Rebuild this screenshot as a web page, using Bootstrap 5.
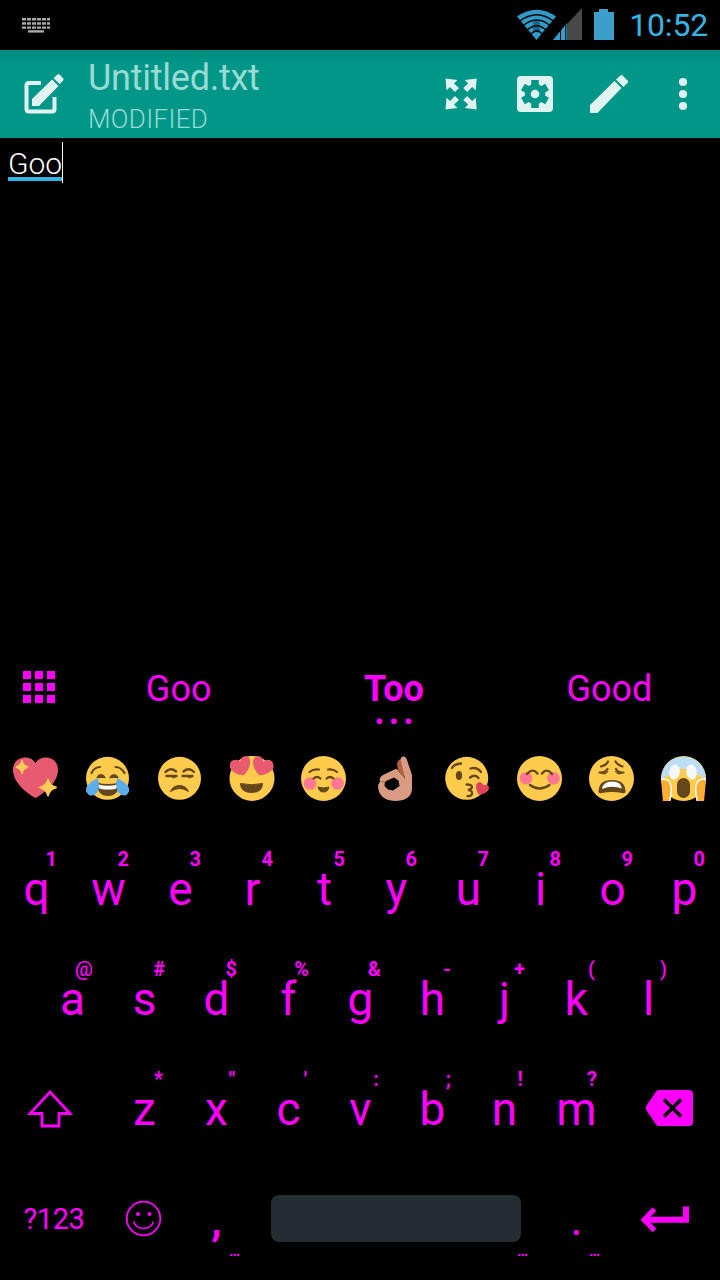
<!DOCTYPE html>
<html lang="en">
<head>
<meta charset="utf-8">
<meta name="viewport" content="width=device-width, initial-scale=1">
<title>Untitled.txt</title>
<link href="https://cdn.jsdelivr.net/npm/bootstrap@5.3.0/dist/css/bootstrap.min.css" rel="stylesheet">
<style>
  body { width: 720px; height: 1280px; overflow: hidden; background: #000; font-family: Roboto, "Noto Sans", sans-serif; color: #f0f; }
  svg { display: block; flex: none; }
  .statusbar { height: 50px; padding: 0 12px 0 22px; }
  .clock { font-size: 32px; line-height: 50px; color: #33b5e5; margin-left: 14px; letter-spacing: -.2px; }
  .appbar { height: 88px; background: linear-gradient(#008d7f, #009688 16px); }
  .doc-title { font-size: 36px; line-height: 40px; color: #9adad3; letter-spacing: -.25px; }
  .doc-state { font-size: 26px; line-height: 30px; color: #9adad3; font-weight: 300; letter-spacing: .35px; padding-top: 6px; }
  .editor { height: 512px; padding: 4px 8px; }
  .typed { font-size: 30px; font-weight: 300; line-height: 44px; height: 41px; color: #fff; border-right: 1px solid #fff; }
  .typed::after { content: ""; position: absolute; left: 0; right: 0; bottom: 2px; height: 4px; background: #33b5e5; }
  .suggestions { height: 92px; padding-right: 3px; font-size: 36px; line-height: 79px; }
  .grid-key { width: 71px; padding: 21px 0 0 23px; }
  .more { left: 0; right: -4px; top: 57px; font-size: 36px; line-height: 10px; letter-spacing: 4px; }
  .emoji-row { height: 92px; padding-top: 13px; }
  .keyrow { height: 110px; }
  .keyrow.short-row { padding: 0 36px; }
  .keyrow.last-row { height: 116px; }
  .key { width: 72px; font-size: 46px; line-height: 111px; padding-left: 1px; }
  .key.wide { width: 108px; padding-left: 0; }
  .key.comma { font-weight: 700; font-size: 42px; line-height: 114px; }
  .hint { right: 15px; top: 15px; font-size: 20px; line-height: 20px; font-weight: 700; }
  .hint.sym { font-weight: 500; }
  .hint.thin { right: 17px; }
  .dots { right: 12px; top: 77px; font-size: 15px; line-height: 20px; font-weight: 700; }
  .key.mode { font-size: 29px; line-height: 111px; letter-spacing: -.4px; }
  .space { width: 250px; height: 47px; background: #232d32; border-radius: 8px; margin: 31px 19px 0; }
</style>
</head>
<body>
<header>
  <div class="statusbar d-flex align-items-center">
    <svg class="me-auto" width="29" height="18" viewBox="0 0 29 18" stroke="#aaa" stroke-width="2.4"><path d="M0 3.300h28M0 7.500h28M0 11.600h28" stroke-dasharray="4 1"/><path d="M6 15.400h16"/></svg>
    <svg width="98" height="34" viewBox="0 0 98 34">
      <path d="M0 8.500Q20-5 39 8.500L19.500 32z" fill="#2f9bc8"/>
      <circle cx="19.500" cy="15" r="3.500" fill="#17698a"/><circle cx="19.500" cy="21" r="3.500" fill="#17698a"/>
      <g fill="none" stroke="#000" stroke-width="1.300"><path d="M2 13.500Q20 0 37 13.500M5.500 18Q20 6 33.500 18M9.500 22.500Q20 13 29.500 22.500M13 27Q20 19 26 27"/></g>
      <path d="M65 0V32H50V16z" fill="#484848"/><path d="M50 15V32H36z" fill="#33a0cc"/><path d="M43.500 18v14M48.800 14v18" stroke="#000" stroke-width="1"/>
      <path d="M77 4h5V1h9v3h6v28H77z" fill="#3b9fc9"/>
    </svg>
    <span class="clock">10:52</span>
  </div>
  <nav class="appbar d-flex">
    <svg width="88" height="88" viewBox="0 0 88 88" fill="#e0f3f1">
      <path d="M41 33H29q-2.500 0-2.500 2.500V59q0 2.500 2.500 2.500h23q2.500 0 2.500-2.500V47" fill="none" stroke="#e0f3f1" stroke-width="4"/>
      <path d="M32 49L52 29.500L58.500 36L39 56H32z"/><path d="M53.500 28.300L57.500 24.500q1-.8 2 0L63.200 28.300q.8 1 0 2L59.800 34z"/>
    </svg>
    <div class="flex-grow-1 pt-2">
      <div class="doc-title">Untitled.txt</div>
      <div class="doc-state">MODIFIED</div>
    </div>
    <svg width="296" height="88" viewBox="424 50 296 88" fill="#e0f3f1">
      <g id="arrows"><path id="arw" d="M445.500 78.500l12 1.500-3.500 3.500 5 4.500-4 4-5-5-3.500 3.500z"/>
      <use href="#arw" transform="matrix(-1 0 0 1 922.200 0)"/></g>
      <use href="#arrows" transform="matrix(1 0 0 -1 0 188)"/>
      <rect x="517" y="76" width="36" height="36" rx="4"/>
      <g stroke="#009688" stroke-width="7.500"><path d="M535 80v28M522.900 87l24.200 14M522.900 101l24.200-14"/></g>
      <circle cx="535" cy="94" r="10.300" fill="#009688"/>
      <circle cx="535" cy="94" r="4.300"/>
      <path d="M590 105L614.500 81L621.500 88L597.500 113H590z"/><path d="M616 79.500L620.500 75.500q1-.8 2 0L627.800 80.800q.8 1 0 2L623.500 87z"/>
      <circle cx="683" cy="82" r="4.100"/><circle cx="683" cy="94" r="4.100"/><circle cx="683" cy="106" r="4.100"/>
    </svg>
  </nav>
</header>

<main class="editor d-flex align-items-start"><div class="typed position-relative">Goo</div></main>

<section>
  <div class="suggestions d-flex text-center">
    <div class="grid-key"><svg width="32" height="32" viewBox="0 0 32 32"><path d="M0 4h32M0 16h32M0 28h32" stroke="#f0f" stroke-width="8" stroke-dasharray="8 4"/></svg></div>
    <div class="flex-fill w-25">Goo</div>
    <div class="flex-fill w-25 position-relative"><b>Too</b><b class="more position-absolute">...</b></div>
    <div class="flex-fill w-25">Good</div>
  </div>

  <div class="emoji-row d-flex">
    <svg width="72" height="48" viewBox="0 0 72 48">
      <path d="M35.500 43C28 39 13 28 13 15C13 1 30-1 35.500 8C41-1 58 1 58 15C58 28 43 39 35.500 43z" fill="#e75a70"/>
      <path d="M22 6q1 5 5.500 6-4.500 1-5.500 6-1-5-5.500-6 4.500-1 5.500-6zM48 24.500q1.500 6.500 8 8-6.500 1.500-8 8-1.500-6.500-8-8 6.500-1.500 8-8z" fill="#fdcb58" stroke="#fdcb58" stroke-width="1.800" stroke-linejoin="round"/>
    </svg>
    <svg width="72" height="48" viewBox="0 0 72 48">
      <circle cx="35.500" cy="23.300" r="21.500" fill="#ffcb4c"/>
      <path d="M19.500 18Q22.500 12 28 12M43.500 12Q49 12 52.500 18" fill="none" stroke="#65471b" stroke-width="2.200" stroke-linecap="round"/>
      <path d="M25 23q4-6 8 0M38 23q4-6 8 0" fill="#65471b" stroke="#65471b" stroke-width="2"/>
      <path d="M25 27.500q10.500 3 22 0Q47 41 36 41T25 27.500z" fill="#65471b"/><path d="M26 29.500q10 2.500 20 0-1 4-3 4.500-7 1-14 0-3-.5-3-4.500z" fill="#fff"/>
      <path d="M26 23Q28 31 25.500 37Q22 42 17 40Q12 36 15 31Q18 27 26 23zM45 23Q43 31 46 37Q50 42 54.500 40Q59 36 56 31Q53 27 45 23z" fill="#5dadec"/>
    </svg>
    <svg width="72" height="48" viewBox="0 0 72 48">
      <circle cx="35.500" cy="23.300" r="21.500" fill="#ffcb4c"/>
      <g fill="none" stroke="#65471b" stroke-width="2.400" stroke-linecap="round"><path d="M21.500 17Q27 12 32 16.500M39.500 16.500Q45 12 50 17"/><path d="M22.500 21h10M38.500 21h10"/></g>
      <path d="M28 21h4.500q-2 3.500-4.500 1.500zM44 21h4.500q-2 3.500-4.500 1.500z" fill="#65471b"/>
      <path d="M26.500 36.500Q29 30.500 35.500 30.500T44.500 36.500Q40 33.500 35.500 33.500T26.500 36.500z" fill="#65471b" stroke="#65471b"/>
    </svg>
    <svg width="72" height="48" viewBox="0 0 72 48">
      <path d="M29 2q7-2 14 0a22.500 22.500 0 1 1-14 0z" fill="#ffcb4c"/>
      <path d="M24.500 28.500q11 2.500 22 0 0 9-11 9T24.500 28.500z" fill="#65471b" stroke="#65471b" stroke-linejoin="round"/>
      <g fill="#e75a70"><path d="M27.500 20.500Q17 19 14 13Q13 6 18 5Q22.500 4 24 7Q25 1 30 1Q35 2 34 9Q33 15 27.500 20.500z"/><path d="M43.500 20.500Q54 19 57.500 13Q58 6 53.500 5Q49 4 47.500 7Q46.500 1 42 1Q36.500 2 37 9Q38 15 43.500 20.500z"/></g>
    </svg>
    <svg width="72" height="48" viewBox="0 0 72 48">
      <circle cx="35.500" cy="23.500" r="22.500" fill="#ffcb4c"/>
      <g fill="#ff7892"><circle cx="22" cy="28.500" r="6.300"/><circle cx="49.500" cy="28.500" r="6.300"/></g>
      <g fill="none" stroke="#65471b" stroke-width="2.200" stroke-linecap="round"><path d="M21.500 17Q25.500 13.500 31 14.500M40 14.500Q45 13.500 49 17"/><path d="M25.500 23.500Q29 20.500 32.500 23.500M38.500 23.500Q42 20.500 45.500 23.500"/></g>
      <path d="M30 32q5.500 2 11 0-1 5-5.500 5t-5.500-5z" fill="#65471b" stroke="#65471b" stroke-linejoin="round"/>
    </svg>
    <svg width="72" height="48" viewBox="0 0 72 48">
      <path d="M37 9Q38 4 42 4L45 26L38 15z" fill="#b55e45"/>
      <path fill-rule="evenodd" d="M41 6Q40 2 43 1.500Q46 1 47 5L52 20V35Q50 46 35 46Q18 45 18 30L20 27Q19 22 23 20L35.500 14Q38 14 39 17L45 24zM25 26.500L24.500 31L28 34.500L33 35.500L39.500 31L38.500 25.500L34 22.500z" fill="#d99b82"/>
      <path d="M21 26.500l4 .5 2-1.500" fill="none" stroke="#b55e45" stroke-width="1"/>
    </svg>
    <svg width="72" height="48" viewBox="0 0 72 48">
      <circle cx="34.700" cy="23.300" r="21.500" fill="#ffcb4c"/>
      <ellipse cx="27" cy="20.500" rx="3.100" ry="4.500" fill="#65471b"/>
      <g fill="none" stroke="#65471b" stroke-width="2.300" stroke-linecap="round"><path d="M20 13Q22 9 29 8.500M38.500 13.500Q45 11.500 49 17M38 22.500Q43 18.500 46.500 23M34.500 29.500Q40 29.500 40 32Q39.500 34.500 36 35Q41 35.500 40 39Q39 41.500 35.500 41"/></g>
      <path d="M38 23q5-6 9 0-5-2-9 0z" fill="#65471b"/>
      <path d="M47 40Q43 34 44.500 29Q48 24.500 51.500 30Q57 28.500 57 34Q55 38.500 47 40z" fill="#e0455a"/>
    </svg>
    <svg width="72" height="48" viewBox="0 0 72 48">
      <circle cx="35.500" cy="23.500" r="22.500" fill="#ffcb4c"/>
      <g fill="#ff7892"><circle cx="22" cy="23.300" r="6.300"/><circle cx="49.500" cy="23.300" r="6.300"/></g>
      <path d="M23 19Q28.500 12.500 33.500 18.500M38 18.500Q43 12.500 48 19M26 30Q35.500 37 45.500 30" fill="none" stroke="#65471b" stroke-width="2.400" stroke-linecap="round"/>
    </svg>
    <svg width="72" height="48" viewBox="0 0 72 48">
      <circle cx="35.500" cy="23.500" r="22.500" fill="#ffcb4c"/>
      <g fill="none" stroke="#65471b" stroke-width="2.200" stroke-linecap="round"><path d="M25 11.500Q30 10.500 32 6.500M39.500 6.500Q42 10.500 46.500 11.500M23.500 17.500Q29 18 31.500 14M40 14Q42 18 47.500 17.500"/></g>
      <path d="M25 18q4 1 7-2-2 5-7 2zM39 16q3 3 7 2-4 3-7-2z" fill="#65471b" stroke="#65471b" stroke-width=".6"/>
      <path d="M22.500 36Q23 25 36 25T49.500 36Q50 39 46 38Q36 36 26 38Q22 39 22.500 36z" fill="#65471b"/><path d="M26 34Q27 26.500 36 26.500T46 33.500Q36 30 26 34z" fill="#fff"/>
    </svg>
    <svg width="72" height="46" viewBox="0 0 72 46">
      <circle cx="35.500" cy="23.500" r="22.500" fill="#ffcb4c"/><path d="M13 24A22.500 22.500 0 1 1 58 24Q53 22 51 20Q46 14 38 14H33Q27 14 22 19Q17 23 13 24z" fill="#bdddf4"/>
      <g fill="#f5f8fa"><ellipse cx="26.500" cy="17" rx="5.300" ry="7.700" transform="rotate(10 26.500 17)"/><ellipse cx="43.500" cy="17" rx="5.300" ry="7.700" transform="rotate(-10 43.500 17)"/></g>
      <rect x="29" y="23" width="13" height="20" rx="6.500" fill="#65471b"/>
      <path d="M13 24.500Q22 23 23 31Q24 38 21.500 47H15zM58 24.500Q49 23 48 31Q47 38 49.500 47H56z" fill="#ffac33"/>
      <path d="M13 24.500Q22 23 23 31Q24 38 21.500 47M58 24.500Q49 23 48 31Q47 38 49.500 47" fill="none" stroke="#fff" stroke-width="1.500"/>
    </svg>
  </div>

  <div class="keyrow d-flex text-center">
    <div class="key position-relative">q<span class="hint position-absolute">1</span></div>
    <div class="key position-relative">w<span class="hint position-absolute">2</span></div>
    <div class="key position-relative">e<span class="hint position-absolute">3</span></div>
    <div class="key position-relative">r<span class="hint position-absolute">4</span></div>
    <div class="key position-relative">t<span class="hint position-absolute">5</span></div>
    <div class="key position-relative">y<span class="hint position-absolute">6</span></div>
    <div class="key position-relative">u<span class="hint position-absolute">7</span></div>
    <div class="key position-relative">i<span class="hint position-absolute">8</span></div>
    <div class="key position-relative">o<span class="hint position-absolute">9</span></div>
    <div class="key position-relative">p<span class="hint position-absolute">0</span></div>
  </div>
  <div class="keyrow short-row d-flex text-center">
    <div class="key position-relative">a<span class="hint sym position-absolute">@</span></div>
    <div class="key position-relative">s<span class="hint position-absolute">#</span></div>
    <div class="key position-relative">d<span class="hint position-absolute">$</span></div>
    <div class="key position-relative">f<span class="hint position-absolute">%</span></div>
    <div class="key position-relative">g<span class="hint position-absolute">&amp;</span></div>
    <div class="key position-relative">h<span class="hint thin position-absolute">-</span></div>
    <div class="key position-relative">j<span class="hint position-absolute">+</span></div>
    <div class="key position-relative">k<span class="hint thin sym position-absolute">(</span></div>
    <div class="key position-relative">l<span class="hint thin sym position-absolute">)</span></div>
  </div>
  <div class="keyrow d-flex text-center">
    <div class="key wide"><svg width="108" height="110" viewBox="0 1054 108 110"><path d="M50 1092L70 1113.500H59V1126H42V1113.500H30z" fill="none" stroke="#f0f" stroke-width="2.800"/></svg></div>
    <div class="key position-relative">z<span class="hint thin position-absolute">*</span></div>
    <div class="key position-relative">x<span class="hint thin position-absolute">"</span></div>
    <div class="key position-relative">c<span class="hint thin position-absolute">'</span></div>
    <div class="key position-relative">v<span class="hint thin position-absolute">:</span></div>
    <div class="key position-relative">b<span class="hint thin position-absolute">;</span></div>
    <div class="key position-relative">n<span class="hint thin position-absolute">!</span></div>
    <div class="key position-relative">m<span class="hint position-absolute">?</span></div>
    <div class="key wide"><svg width="108" height="110" viewBox="612 1054 108 110"><path d="M659 1090h30q4 0 4 4v28q0 4-4 4h-30q-2 0-3-1.500L646 1109.500q-1-1.500 0-3L656 1091.500q1-1.500 3-1.500z" fill="#f0f"/><path d="M664 1099.500l17 17M681 1099.500l-17 17" stroke="#000" stroke-width="3.600"/></svg></div>
  </div>
  <div class="keyrow last-row d-flex text-center">
    <div class="key wide mode">?123</div>
    <div class="key p-0"><svg width="72" height="110" viewBox="108 1164 72 110"><g fill="none" stroke="#f0f"><circle cx="143.500" cy="1218.500" r="16.800" stroke-width="1.800"/><path d="M133.500 1221.500Q136 1228.500 143.500 1228.500T153.500 1221.500" stroke-width="1.600"/></g><circle cx="138" cy="1214" r="2" fill="#f0f"/><circle cx="149.500" cy="1214" r="2" fill="#f0f"/></svg></div>
    <div class="key comma position-relative">,<span class="dots position-absolute">…</span></div>
    <div class="position-relative"><div class="space"></div><span class="dots position-absolute">…</span></div>
    <div class="key position-relative">.<span class="dots position-absolute">…</span></div>
    <div class="key wide"><svg width="108" height="110" viewBox="612 1164 108 110"><g fill="none" stroke="#f0f"><path d="M686 1206.500V1219.700H645" stroke-width="6"/><path d="M654.500 1209L644 1219.700L654.500 1230.500" stroke-width="5"/></g></svg></div>
  </div>
</section>
<script src="https://cdn.jsdelivr.net/npm/bootstrap@5.3.0/dist/js/bootstrap.bundle.min.js"></script>
</body>
</html>
